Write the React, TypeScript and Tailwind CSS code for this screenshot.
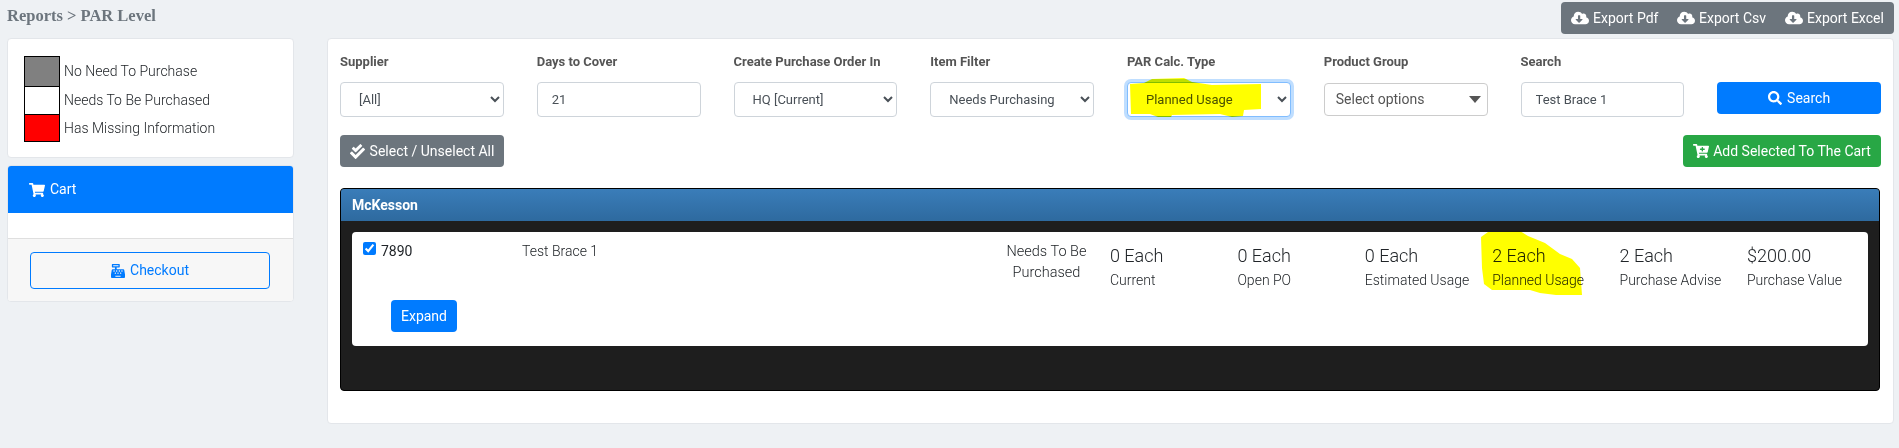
import { FaCloudDownloadAlt, FaShoppingCart, FaCartPlus, FaCashRegister, FaSearch, FaCheckDouble } from 'react-icons/fa'

// ── Data ───────────────────────────────────────────────────────────────────

const LEGEND = [
  { label: 'No Need To Purchase', swatch: 'bg-[#808080] h-[30px] border-t' },
  { label: 'Needs To Be Purchased', swatch: 'bg-white h-[28px] border-t' },
  { label: 'Has Missing Information', swatch: 'bg-[#ff0000] h-[28px] border-y' },
]

const STATS = [
  { value: '0 Each', label: 'Current' },
  { value: '0 Each', label: 'Open PO' },
  { value: '0 Each', label: 'Estimated Usage' },
  { value: '2 Each', label: 'Planned Usage' },
  { value: '2 Each', label: 'Purchase Advise' },
  { value: '$200.00', label: 'Purchase Value' },
]

const selectCls =
  'h-[35px] w-full rounded-[4px] border border-[#ced4da] bg-white pl-[14px] pr-[4px] text-[13px] font-normal text-[#495057] outline-none'
const labelCls = 'h-[43px] pt-[14px] text-[13px] leading-[18px] font-bold text-[#555] whitespace-nowrap'

function Field({ label, children }: { label: string; children: React.ReactNode }) {
  return (
    <div>
      <div className={labelCls}>{label}</div>
      {children}
    </div>
  )
}

// ── Component ──────────────────────────────────────────────────────────────

export default function App() {
  return (
    <div className="relative flex h-[448px] w-[1899px] flex-col overflow-hidden bg-[#eef1f4] font-['Roboto',sans-serif] text-[14px] text-[#212529]">

      {/* Header */}
      <div className="flex h-[38px] flex-shrink-0 justify-between pr-[5px] pl-[7px]">
        <div className="pt-[6px] font-['Liberation_Serif',serif] text-[16.5px] leading-[20px] font-bold text-[#6c757d]">
          Reports &gt; PAR Level
        </div>
        <div className="mt-[2px] flex h-[32px] w-[333px] items-center rounded-[4px] bg-[#6c757d] pl-[10px] text-white">
          <FaCloudDownloadAlt className="mr-[4px] text-[18px]" />
          <span className="w-[84px]">Export Pdf</span>
          <FaCloudDownloadAlt className="mr-[4px] text-[18px]" />
          <span className="w-[86px]">Export Csv</span>
          <FaCloudDownloadAlt className="mr-[4px] text-[18px]" />
          <span>Export Excel</span>
        </div>
      </div>

      {/* Body */}
      <div className="flex flex-1 pl-[7px]">

        {/* Sidebar */}
        <aside className="mr-[33px] w-[287px] flex-shrink-0">
          <div className="h-[120px] rounded-[4px] border border-[#e3e6ea] bg-white pt-[17px] pl-[16px] font-light">
            {LEGEND.map(item => (
              <div key={item.label} className="flex items-center">
                <div className={`w-[36px] border-x border-black ${item.swatch}`} />
                <span className="ml-[4px]">{item.label}</span>
              </div>
            ))}
          </div>
          <div className="mt-[7px] h-[137px] overflow-hidden rounded-[4px] border border-[#e3e6ea] bg-white font-light">
            <div className="flex h-[47px] items-center bg-[#007bff] pl-[21px] text-white">
              <FaShoppingCart className="mr-[5px] text-[16px]" />
              <span className="font-normal">Cart</span>
            </div>
            <div className="h-[25px]" />
            <div className="h-[64px] border-t border-[#dfdfdf] bg-[#f7f7f7] pt-[13px] pl-[22px]">
              <button className="flex h-[37px] w-[240px] items-center justify-center rounded-[4px] border border-[#007bff] font-normal text-[#007bff]">
                <FaCashRegister className="mr-[5px] text-[14px]" />
                Checkout
              </button>
            </div>
          </div>
        </aside>

        {/* Main panel */}
        <main className="h-[386px] w-[1567px] flex-shrink-0 rounded-[4px] border border-[#e3e6ea] bg-white pl-[12px]">

          <div className="grid w-[1541px] grid-cols-8 gap-x-[33px]">
            <Field label="Supplier">
              <select className={selectCls} defaultValue="[All]"><option>[All]</option></select>
            </Field>
            <Field label="Days to Cover">
              <input className={selectCls} defaultValue="21" />
            </Field>
            <Field label="Create Purchase Order In">
              <select className={selectCls}><option>HQ [Current]</option></select>
            </Field>
            <Field label="Item Filter">
              <select className={selectCls}><option>Needs Purchasing</option></select>
            </Field>
            <Field label="PAR Calc. Type">
              <select className="h-[35px] w-full rounded-[4px] border border-[#80bdff] bg-white pl-[14px] pr-[4px] text-[13px] text-[#495057] shadow-[0_0_0_3px_rgba(0,123,255,0.25)] outline-none">
                <option>Planned Usage</option>
              </select>
            </Field>
            <Field label="Product Group">
              <div className="mt-[1px] flex h-[33px] items-center justify-between rounded-[4px] border border-[#ccc] pr-[6px] pl-[11px] text-[14px] text-[#555]">
                Select options
                <span className="h-0 w-0 border-x-[6px] border-t-[7px] border-x-transparent border-t-[#555]" />
              </div>
            </Field>
            <Field label="Search">
              <input className={selectCls} defaultValue="Test Brace 1" />
            </Field>
            <div className="pt-[43px]">
              <button className="flex h-[32px] w-full items-center justify-center rounded-[4px] bg-[#007bff] text-white">
                <FaSearch className="mr-[5px] text-[14px]" />
                Search
              </button>
            </div>
          </div>

          <div className="mt-[18px] flex w-[1541px] justify-between">
            <button className="flex h-[32px] w-[164px] items-center justify-center rounded-[4px] bg-[#6c757d] text-white">
              <FaCheckDouble className="mr-[5px] text-[15px]" />
              Select / Unselect All
            </button>
            <button className="flex h-[32px] w-[198px] items-center justify-center rounded-[4px] bg-[#28a745] text-white">
              <FaCartPlus className="mr-[4px] text-[16px]" />
              Add Selected To The Cart
            </button>
          </div>

          {/* Supplier section */}
          <section className="mt-[21px] h-[203px] w-[1540px] overflow-hidden rounded-[4px] border border-black bg-[#1e1e1e]">
            <div className="flex h-[32px] items-center bg-gradient-to-b from-[#3a7db9] to-[#2e6a9f] pl-[11px] text-[14px] font-bold text-white">
              McKesson
            </div>
            <div className="mx-[11px] mt-[11px] h-[114px] rounded-[4px] bg-white">
              <div className="flex h-[68px] font-light">
                <div className="flex w-[170px] flex-shrink-0 items-start pt-[10px] pl-[11px]">
                  <input type="checkbox" defaultChecked className="m-0 h-[13px] w-[13px] accent-[#007bff]" />
                  <span className="ml-[5px] font-normal leading-[18px]">7890</span>
                </div>
                <div className="w-[478px] flex-shrink-0 pt-[9px] leading-[21px]">Test Brace 1</div>
                <div className="w-[110px] flex-shrink-0 pt-[9px] pr-[17px] text-center text-[14.5px] leading-[21px]">
                  Needs To Be
                  <br />
                  Purchased
                </div>
                <div className="flex">
                  {STATS.map(stat => (
                    <div key={stat.label} className="w-[127.4px] flex-shrink-0 pt-[11px]">
                      <div className="text-[18px] leading-[25px]">{stat.value}</div>
                      <div className="mt-[2px] leading-[21px]">{stat.label}</div>
                    </div>
                  ))}
                </div>
              </div>
              <button className="ml-[39px] h-[32px] w-[66px] rounded-[4px] bg-[#007bff] text-white">Expand</button>
            </div>
          </section>
        </main>
      </div>

      {/* Marker highlights painted over the screenshot */}
      <svg className="pointer-events-none absolute top-0 left-0 mix-blend-multiply" width="1899" height="448">
        <path
          d="M1130 84 L1144 83 L1152 79 L1184 78 L1192 82 L1212 85 L1261 84 L1261 109 L1244 110 L1243 116 L1232 117 L1220 114 L1172 115 L1171 117 L1158 117 L1150 114 L1131 114 Z"
          fill="#ffff00"
        />
        <path
          d="M1481 237 L1488 232 L1520 231 L1528 236 L1545 243 L1560 254 L1572 259 L1580 268 L1582 295 L1556 295 L1540 293 L1530 290 L1492 290 L1484 284 L1482 268 Z"
          fill="#ffff00"
        />
      </svg>
    </div>
  )
}
